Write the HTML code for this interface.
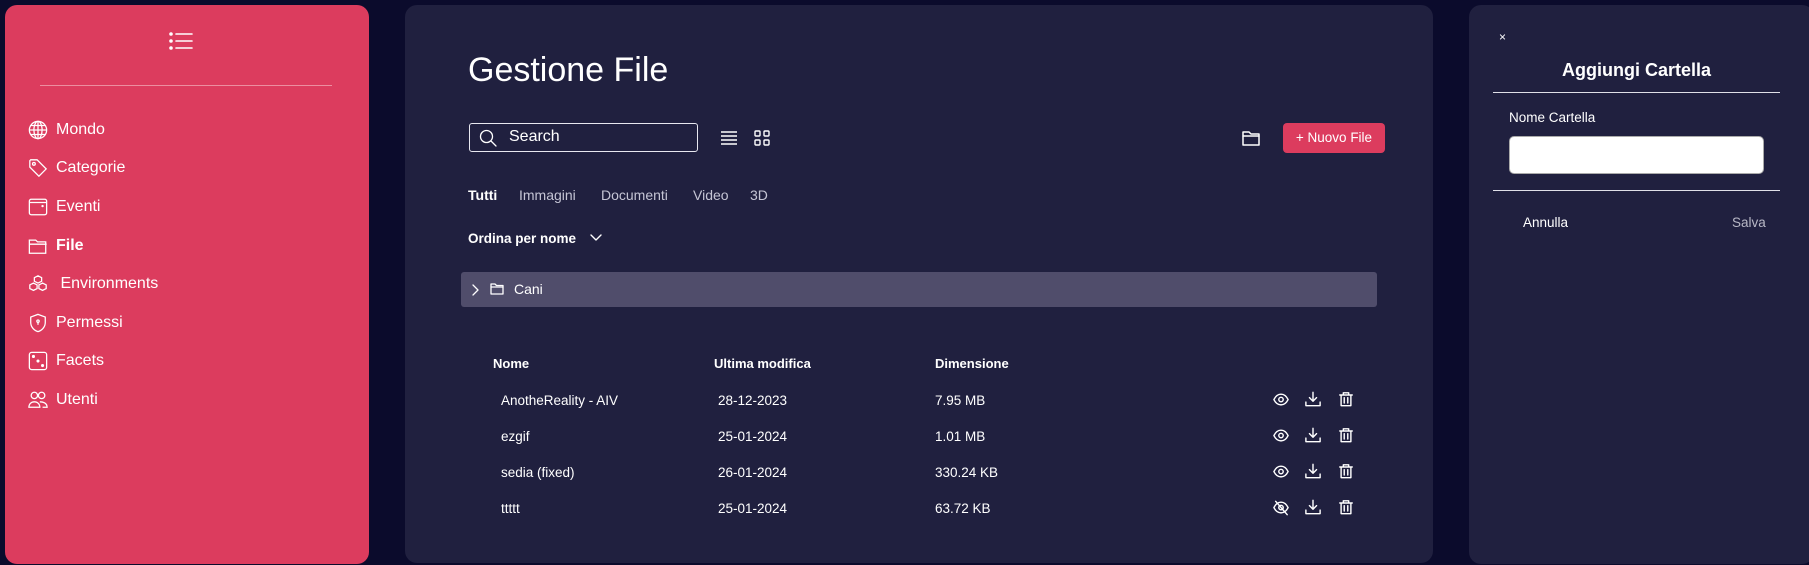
<!DOCTYPE html>
<html><head><meta charset="utf-8"><style>
*{margin:0;padding:0;box-sizing:border-box}
body{width:1809px;height:565px;background:#0b0b2c;font-family:"Liberation Sans",sans-serif;color:#fff;position:relative;overflow:hidden}
.abs{position:absolute}
#side{left:5px;top:5px;width:364px;height:559px;background:#dc3c5e;border-radius:12px}
#main{left:405px;top:5px;width:1028px;height:558px;background:#20203f;border-radius:12px}
#right{left:1469px;top:5px;width:345px;height:559px;background:#20203f;border-radius:12px}
.nav{position:absolute;left:28px;font-size:16px;display:flex;align-items:center;height:24px}
.nav svg{width:20px;height:20px;margin-right:8px;fill:none;stroke:#fff;stroke-width:1.4}
.t{position:absolute;white-space:nowrap}
.r{font-size:13.5px}
svg.ic{position:absolute;fill:none;stroke:#fff;stroke-width:1.6;stroke-linecap:round;stroke-linejoin:round}
</style></head><body>
<div id="side" class="abs"></div>
<svg class="ic" style="left:169px;top:32px" width="24" height="18" viewBox="0 0 24 18"><circle cx="2" cy="2" r="1" fill="#fff"/><circle cx="2" cy="9" r="1" fill="#fff"/><circle cx="2" cy="16" r="1" fill="#fff"/><path d="M7 2h16M7 9h16M7 16h16"/></svg>
<div class="abs" style="left:40px;top:85px;width:292px;height:1px;background:#ec8ea0"></div>
<div class="nav" style="top:118px"><svg viewBox="0 0 22 22"><circle cx="11" cy="11" r="9.5"/><ellipse cx="11" cy="11" rx="4.5" ry="9.5"/><path d="M1.5 11h19M3 6h16M3 16h16M11 1.5v19"/></svg>Mondo</div>
<div class="nav" style="top:156px"><svg viewBox="0 0 22 22"><path d="M2 3v7l10 10 8-8L10 2H3z"/><circle cx="6.5" cy="6.5" r="1.5"/></svg>Categorie</div>
<div class="nav" style="top:195px"><svg viewBox="0 0 22 22"><rect x="1.5" y="2.5" width="19" height="17" rx="2"/><path d="M1.5 6h19"/><circle cx="16" cy="10" r=".6" fill="#fff"/></svg>Eventi</div>
<div class="nav" style="top:234px;font-weight:bold"><svg viewBox="0 0 22 22"><path d="M1.5 4.5h7l2 2h9v12.5h-18z"/><path d="M1.5 9h19"/></svg>File</div>
<div class="nav" style="top:272px"><svg viewBox="0 0 22 22"><path d="M11 2l4 2v4l-4 2-4-2V4z M6 10l4 2v4l-4 2-4-2v-4z M16 10l4 2v4l-4 2-4-2v-4z"/></svg>&nbsp;Environments</div>
<div class="nav" style="top:311px"><svg viewBox="0 0 22 22"><path d="M11 1.5l8 3v6c0 5-4 9-8 10-4-1-8-5-8-10v-6z"/><circle cx="11" cy="9" r="1.3"/><path d="M11 10v3"/></svg>Permessi</div>
<div class="nav" style="top:349px"><svg viewBox="0 0 22 22"><rect x="1.5" y="1.5" width="19" height="19" rx="2.5"/><circle cx="6" cy="6" r="1" fill="#fff"/><circle cx="11" cy="11" r="1" fill="#fff"/><circle cx="16" cy="16" r="1" fill="#fff"/></svg>Facets</div>
<div class="nav" style="top:388px"><svg viewBox="0 0 22 22"><circle cx="7" cy="6" r="3.5"/><circle cx="15" cy="6" r="3.5"/><path d="M1 19c0-4 3-6 6-6s6 2 6 6zM13 13c3 0 8 1 8 6h-5"/></svg>Utenti</div>

<div id="main" class="abs"></div>
<div class="t" style="left:468px;top:51px;font-size:34px">Gestione File</div>
<div class="abs" style="left:469px;top:123px;width:229px;height:29px;border:1.5px solid #e8e8f0;border-radius:3px"></div>
<svg class="ic" style="left:479px;top:129px;stroke-width:1.3" width="18" height="18" viewBox="0 0 18 18"><circle cx="7.5" cy="7.5" r="6"/><path d="M12 12l5 5"/></svg>
<div class="t" style="left:509px;top:128px;font-size:16px">Search</div>
<svg class="ic" style="left:721px;top:131px" width="16" height="14" viewBox="0 0 16 14"><path d="M0 1h16M0 5h16M0 9h16M0 13h16"/></svg>
<svg class="ic" style="left:754px;top:130px;stroke-width:1.4" width="16" height="16" viewBox="0 0 16 16"><rect x="1" y="1" width="5" height="5" rx="1"/><rect x="10" y="1" width="5" height="5" rx="1"/><rect x="1" y="10" width="5" height="5" rx="1"/><rect x="10" y="10" width="5" height="5" rx="1"/></svg>
<svg class="ic" style="left:1242px;top:131px;stroke-width:1.5" width="18" height="15" viewBox="0 0 18 15"><path d="M1 1h6l2 2h8v11H1z"/><path d="M1 5h16"/></svg>
<div class="abs" style="left:1283px;top:123px;width:102px;height:30px;background:#dc3c5e;border-radius:4px;font-size:13.5px;text-align:center;line-height:30px">+ Nuovo File</div>
<div class="t" style="left:468px;top:187px;font-size:14px;font-weight:bold">Tutti</div>
<div class="t" style="left:519px;top:187px;font-size:14px;color:#c5c5d5">Immagini</div>
<div class="t" style="left:601px;top:187px;font-size:14px;color:#c5c5d5">Documenti</div>
<div class="t" style="left:693px;top:187px;font-size:14px;color:#c5c5d5">Video</div>
<div class="t" style="left:750px;top:187px;font-size:14px;color:#c5c5d5">3D</div>
<div class="t" style="left:468px;top:231px;font-size:13.5px;font-weight:bold">Ordina per nome</div>
<svg class="ic" style="left:590px;top:234px;stroke-width:1.4" width="12" height="8" viewBox="0 0 12 8"><path d="M1 1l5 5 5-5"/></svg>
<div class="abs" style="left:461px;top:272px;width:916px;height:35px;background:#504d6b;border-radius:3px"></div>
<svg class="ic" style="left:472px;top:284px;stroke-width:1.3" width="7" height="12" viewBox="0 0 7 12"><path d="M1 1l5 5-5 5"/></svg>
<svg class="ic" style="left:490px;top:283px;stroke-width:1.3" width="14" height="12" viewBox="0 0 14 12"><path d="M1 1h4l1.5 1.5H13V11H1z"/><path d="M1 4h12"/></svg>
<div class="t" style="left:514px;top:281px;font-size:14px">Cani</div>
<div class="t" style="left:493px;top:356px;font-size:13px;font-weight:bold">Nome</div>
<div class="t" style="left:714px;top:356px;font-size:13px;font-weight:bold">Ultima modifica</div>
<div class="t" style="left:935px;top:356px;font-size:13px;font-weight:bold">Dimensione</div>
<div class="t r" style="left:501px;top:393px">AnotheReality - AIV</div>
<div class="t r" style="left:718px;top:393px">28-12-2023</div>
<div class="t r" style="left:935px;top:393px">7.95 MB</div>
<div class="t r" style="left:501px;top:429px">ezgif</div>
<div class="t r" style="left:718px;top:429px">25-01-2024</div>
<div class="t r" style="left:935px;top:429px">1.01 MB</div>
<div class="t r" style="left:501px;top:465px">sedia (fixed)</div>
<div class="t r" style="left:718px;top:465px">26-01-2024</div>
<div class="t r" style="left:935px;top:465px">330.24 KB</div>
<div class="t r" style="left:501px;top:501px">ttttt</div>
<div class="t r" style="left:718px;top:501px">25-01-2024</div>
<div class="t r" style="left:935px;top:501px">63.72 KB</div>
<svg width="0" height="0" style="position:absolute"><defs>
<g id="eye"><path d="M1 8c2-4 5-6 8-6s6 2 8 6c-2 4-5 6-8 6s-6-2-8-6z"/><circle cx="9" cy="8" r="2.5"/></g>
<g id="dl"><path d="M9 1v10M5 7l4 4 4-4M1 12v4h16v-4"/></g>
<g id="tr"><path d="M2 4h14M6 4V1.5h6V4M3.5 4v12h11V4M7 7v6M11 7v6"/></g>
</defs></svg>
<svg class="ic" style="left:1273px;top:392px" width="16" height="16" viewBox="0 0 18 17"><use href="#eye"/></svg>
<svg class="ic" style="left:1305px;top:391px" width="16" height="16" viewBox="0 0 18 17"><use href="#dl"/></svg>
<svg class="ic" style="left:1338px;top:391px" width="16" height="16" viewBox="0 0 18 17"><use href="#tr"/></svg>
<svg class="ic" style="left:1273px;top:428px" width="16" height="16" viewBox="0 0 18 17"><use href="#eye"/></svg>
<svg class="ic" style="left:1305px;top:427px" width="16" height="16" viewBox="0 0 18 17"><use href="#dl"/></svg>
<svg class="ic" style="left:1338px;top:427px" width="16" height="16" viewBox="0 0 18 17"><use href="#tr"/></svg>
<svg class="ic" style="left:1273px;top:464px" width="16" height="16" viewBox="0 0 18 17"><use href="#eye"/></svg>
<svg class="ic" style="left:1305px;top:463px" width="16" height="16" viewBox="0 0 18 17"><use href="#dl"/></svg>
<svg class="ic" style="left:1338px;top:463px" width="16" height="16" viewBox="0 0 18 17"><use href="#tr"/></svg>
<svg class="ic" style="left:1273px;top:500px" width="16" height="16" viewBox="0 0 18 17"><use href="#eye"/><path d="M3 1l13 15"/></svg>
<svg class="ic" style="left:1305px;top:499px" width="16" height="16" viewBox="0 0 18 17"><use href="#dl"/></svg>
<svg class="ic" style="left:1338px;top:499px" width="16" height="16" viewBox="0 0 18 17"><use href="#tr"/></svg>

<div id="right" class="abs"></div>
<div class="t" style="left:1499px;top:30px;font-size:12px">×</div>
<div class="t" style="left:1493px;top:60px;width:287px;text-align:center;font-size:18px;font-weight:bold">Aggiungi Cartella</div>
<div class="abs" style="left:1493px;top:92px;width:287px;height:1px;background:#e0e0e8"></div>
<div class="t" style="left:1509px;top:110px;font-size:13.5px">Nome Cartella</div>
<div class="abs" style="left:1509px;top:136px;width:255px;height:38px;background:#fff;border-radius:5px;border:1px solid #aaa"></div>
<div class="abs" style="left:1493px;top:190px;width:287px;height:1px;background:#e0e0e8"></div>
<div class="t" style="left:1523px;top:215px;font-size:13.5px">Annulla</div>
<div class="t" style="left:1732px;top:215px;font-size:13.5px;color:#b8b8c6">Salva</div>
</body></html>
